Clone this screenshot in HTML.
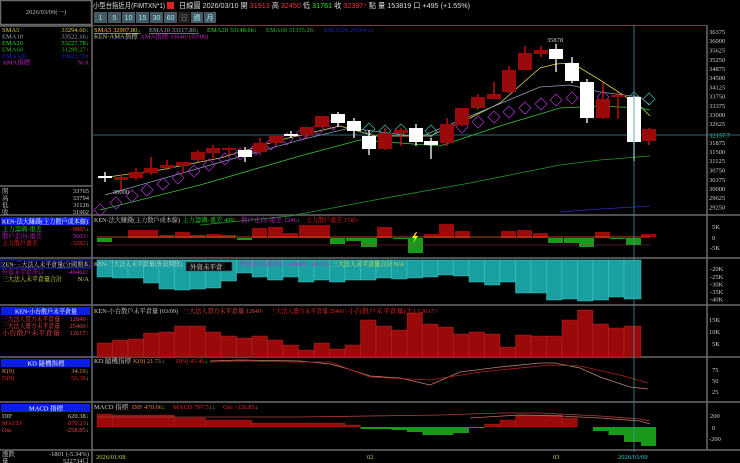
<!DOCTYPE html>
<html><head><meta charset="utf-8"><style>
html,body{margin:0;padding:0;background:#000;width:740px;height:463px;overflow:hidden}
svg{display:block}
text{font-family:"Liberation Sans","Noto Sans CJK TC",sans-serif;font-size:7px}
.s{font-family:"Liberation Serif","Noto Serif CJK SC",serif;font-size:6.5px}
</style></head><body>
<svg width="740" height="463" viewBox="0 0 740 463">
<rect width="740" height="463" fill="#000"/>
<g fill="none" stroke="#6a6a6a" stroke-width="1.5">
<rect x="0.5" y="0.5" width="91" height="24"/>
<line x1="92" y1="0" x2="92" y2="463"/>
<line x1="0" y1="26" x2="92" y2="26"/>
<line x1="0" y1="186" x2="92" y2="186"/>
<line x1="0" y1="215" x2="740" y2="215"/>
<line x1="0" y1="258" x2="740" y2="258"/>
<line x1="0" y1="305" x2="740" y2="305"/>
<line x1="0" y1="357" x2="740" y2="357"/>
<line x1="0" y1="402" x2="740" y2="402"/>
<line x1="0" y1="450" x2="740" y2="450"/>
<line x1="707" y1="25" x2="707" y2="450"/>
</g>
<rect x="93" y="25" width="614" height="1" fill="#7a3a4a"/>
<text x="46" y="14" fill="#bbb" text-anchor="middle" class="s">2026/03/09(一)</text>
<g class="s">
<text x="2" y="32" fill="#e0d040" class="s">SMA5</text><text x="89" y="32" fill="#e0d040" text-anchor="end" class="s">33294.60<tspan fill="#0f0">↓</tspan></text>
<text x="2" y="38.5" fill="#9ab" class="s">EMA10</text><text x="89" y="38.5" fill="#9ab" text-anchor="end" class="s">33522.16<tspan fill="#0f0">↓</tspan></text>
<text x="2" y="45" fill="#2d2" class="s">EMA20</text><text x="89" y="45" fill="#2d2" text-anchor="end" class="s">33227.78<tspan fill="#0f0">↓</tspan></text>
<text x="2" y="51.5" fill="#2b2" class="s">EMA60</text><text x="89" y="51.5" fill="#2b2" text-anchor="end" class="s">31299.27<tspan fill="#f22">↑</tspan></text>
<text x="2" y="58" fill="#22c" class="s">EMA120</text><text x="89" y="58" fill="#22c" text-anchor="end" class="s">29623.70<tspan fill="#f22">↑</tspan></text>
<text x="2" y="64.5" fill="#c2c" class="s">AMA指標</text><text x="89" y="64.5" fill="#c2c" text-anchor="end" class="s">N/A</text>
<text x="2" y="193" fill="#ccc" class="s">開</text><text x="89" y="193" fill="#ccc" text-anchor="end" class="s">33765</text>
<text x="2" y="200" fill="#ccc" class="s">高</text><text x="89" y="200" fill="#ccc" text-anchor="end" class="s">33794</text>
<text x="2" y="207" fill="#ccc" class="s">低</text><text x="89" y="207" fill="#ccc" text-anchor="end" class="s">31126</text>
<text x="2" y="214" fill="#ccc" class="s">收</text><text x="89" y="214" fill="#ccc" text-anchor="end" class="s">31902</text>
</g>
<rect x="1" y="217" width="89" height="8" fill="#0a1ee8"/>
<text x="2" y="223.5" fill="#fff" class="s" textLength="86" lengthAdjust="spacingAndGlyphs">KEN-法大賺錢(主力散戶成本線)</text>
<text x="2" y="231" fill="#2d2" class="s" textLength="40" lengthAdjust="spacingAndGlyphs">主力籌碼-重差</text><text x="89" y="231" fill="#e33" text-anchor="end" class="s">-9885<tspan fill="#0f0">↓</tspan></text>
<text x="2" y="238" fill="#c2c" class="s" textLength="40" lengthAdjust="spacingAndGlyphs">散戶走向-重差</text><text x="89" y="238" fill="#c2c" text-anchor="end" class="s">5603<tspan fill="#f22">↑</tspan></text>
<text x="2" y="245" fill="#e22" class="s" textLength="36" lengthAdjust="spacingAndGlyphs">主力散戶重差</text><text x="89" y="245" fill="#e22" text-anchor="end" class="s">-3282<tspan fill="#0f0">↓</tspan></text>
<rect x="1" y="260" width="89" height="8" fill="#000" stroke="#1a2ee8" stroke-width="1"/>
<text x="2" y="266.5" fill="#ddd" class="s" textLength="87" lengthAdjust="spacingAndGlyphs">ZEN-三大法人未平倉量(分國期本</text>
<text x="2" y="274" fill="#c2c" class="s" textLength="42" lengthAdjust="spacingAndGlyphs">外資未平倉淨口</text><text x="89" y="274" fill="#c2c" text-anchor="end" class="s">-40462<tspan fill="#f22">↑</tspan></text>
<text x="2" y="281" fill="#dd4" class="s" textLength="60" lengthAdjust="spacingAndGlyphs">三大法人未平倉量合計</text><text x="89" y="281" fill="#dd4" text-anchor="end" class="s">N/A</text>
<rect x="1" y="307" width="89" height="8" fill="#0a1ee8"/>
<text x="46" y="313.5" fill="#fff" text-anchor="middle" class="s" textLength="62" lengthAdjust="spacingAndGlyphs">KEN-小台散戶未平倉量</text>
<text x="2" y="321" fill="#e44" class="s" textLength="58" lengthAdjust="spacingAndGlyphs">三大法人買方未平倉量</text><text x="89" y="321" fill="#e44" text-anchor="end" class="s">12849<tspan fill="#f22">↑</tspan></text>
<text x="2" y="328" fill="#e44" class="s" textLength="58" lengthAdjust="spacingAndGlyphs">三大法人賣方未平倉量</text><text x="89" y="328" fill="#e44" text-anchor="end" class="s">25466<tspan fill="#f22">↑</tspan></text>
<text x="2" y="335" fill="#e44" class="s" textLength="58" lengthAdjust="spacingAndGlyphs">小台散戶未平倉量</text><text x="89" y="335" fill="#e44" text-anchor="end" class="s">12617<tspan fill="#f22">↑</tspan></text>
<rect x="1" y="359" width="89" height="8" fill="#0a1ee8"/>
<text x="46" y="365.5" fill="#fff" text-anchor="middle" class="s">KD 隨機指標</text>
<text x="2" y="373" fill="#d84" class="s">K(9)</text><text x="89" y="373" fill="#d84" text-anchor="end" class="s">34.19<tspan fill="#0f0">↓</tspan></text>
<text x="2" y="380" fill="#d22" class="s">D(9)</text><text x="89" y="380" fill="#d22" text-anchor="end" class="s">50.38<tspan fill="#0f0">↓</tspan></text>
<rect x="1" y="404" width="89" height="8" fill="#0a1ee8"/>
<text x="46" y="410.5" fill="#fff" text-anchor="middle" class="s">MACD 指標</text>
<text x="2" y="418" fill="#ccc" class="s">DIF</text><text x="89" y="418" fill="#ccc" text-anchor="end" class="s">620.38<tspan fill="#0f0">↓</tspan></text>
<text x="2" y="425" fill="#e22" class="s">MACD</text><text x="89" y="425" fill="#e22" text-anchor="end" class="s">879.23<tspan fill="#0f0">↓</tspan></text>
<text x="2" y="432" fill="#e44" class="s">Osc</text><text x="89" y="432" fill="#e44" text-anchor="end" class="s">-258.85<tspan fill="#0f0">↓</tspan></text>
<text x="2" y="456" fill="#ccc" class="s">漲跌</text><text x="89" y="456" fill="#ccc" text-anchor="end" class="s">-1801 (-5.34%)</text>
<text x="2" y="463" fill="#ccc" class="s">量</text><text x="89" y="463" fill="#ccc" text-anchor="end" class="s">522734口</text>

<text x="93" y="8" fill="#ddd" style="font-size:7.5px" textLength="72" lengthAdjust="spacingAndGlyphs">小型台指近月(FIMTXN*1)</text>
<rect x="167" y="2" width="7" height="7" fill="#d22"/>
<text x="179" y="8" fill="#ddd" style="font-size:7.5px" textLength="291" lengthAdjust="spacingAndGlyphs">日線圖 2026/03/10 開 <tspan fill="#f33">31913</tspan> 高 <tspan fill="#f33">32450</tspan> 低 <tspan fill="#2e2">31761</tspan> 收 <tspan fill="#f33">32397</tspan><tspan fill="#f33">↑</tspan> 點 量 153819 口 +495 (+1.55%)</text>
<g>
<rect x="94" y="12" width="13" height="11" fill="#465a66"/><text x="100.5" y="20" fill="#9ee" text-anchor="middle">1</text>
<rect x="108" y="12" width="13" height="11" fill="#465a66"/><text x="114.5" y="20" fill="#9ee" text-anchor="middle">5</text>
<rect x="122" y="12" width="13" height="11" fill="#465a66"/><text x="128.5" y="20" fill="#9ee" text-anchor="middle">10</text>
<rect x="136" y="12" width="13" height="11" fill="#465a66"/><text x="142.5" y="20" fill="#9ee" text-anchor="middle">15</text>
<rect x="150" y="12" width="13" height="11" fill="#465a66"/><text x="156.5" y="20" fill="#9ee" text-anchor="middle">30</text>
<rect x="164" y="12" width="13" height="11" fill="#465a66"/><text x="170.5" y="20" fill="#9ee" text-anchor="middle">60</text>
<rect x="178" y="12" width="12" height="11" fill="#222"/><text x="184" y="20" fill="#777" text-anchor="middle">日</text>
<rect x="191" y="12" width="12" height="11" fill="#465a66"/><text x="197" y="20" fill="#9ee" text-anchor="middle">週</text>
<rect x="204" y="12" width="12" height="11" fill="#465a66"/><text x="210" y="20" fill="#9ee" text-anchor="middle">月</text>
</g>
<text x="94" y="32" fill="#dd4" class="s" text-decoration="underline">SMA5 32907.80<tspan fill="#0f0">↓</tspan></text>
<text x="149" y="32" fill="#9ab" class="s" text-decoration="underline">EMA10 33117.80<tspan fill="#0f0">↓</tspan></text>
<text x="207" y="32" fill="#2d2" class="s">EMA20 33148.66<tspan fill="#0f0">↓</tspan></text>
<text x="266" y="32" fill="#2b2" class="s">EMA60 31335.26<tspan fill="#f22">↑</tspan></text>
<text x="324" y="32" fill="#22c" class="s">EMA120 29304.2<tspan fill="#f22">↑</tspan></text>
<text x="94" y="38.5" fill="#ccc" class="s">KEN-AMA指標</text>
<text x="140" y="38.5" fill="#c2c" class="s">AMA指標 33640<tspan fill="#f22">↑</tspan>(03/06)</text>

<g fill="#ccc" class="s">
<text x="709" y="34" class="s">36375</text><text x="709" y="43" class="s">36000</text><text x="709" y="52.5" class="s">35625</text><text x="709" y="62" class="s">35250</text><text x="709" y="71" class="s">34875</text><text x="709" y="80" class="s">34500</text><text x="709" y="89.5" class="s">34125</text><text x="709" y="98.5" class="s">33750</text><text x="709" y="108" class="s">33375</text><text x="709" y="117" class="s">33000</text><text x="709" y="126" class="s">32625</text><text x="709" y="145" class="s">31875</text><text x="709" y="154" class="s">31500</text><text x="709" y="163" class="s">31125</text><text x="709" y="172.5" class="s">30750</text><text x="709" y="182" class="s">30375</text><text x="709" y="191" class="s">30000</text><text x="709" y="200" class="s">29625</text><text x="709" y="209.5" class="s">29250</text>
<text x="709" y="137.5" fill="#2dc" class="s">32157.7</text>
<text x="712" y="229" class="s">5K</text><text x="712" y="240" class="s">0</text><text x="710" y="250" class="s">-5K</text>
<text x="710" y="271" class="s">-20K</text><text x="710" y="279" class="s">-25K</text><text x="710" y="286.5" class="s">-30K</text><text x="710" y="294" class="s">-35K</text><text x="710" y="301.5" class="s">-40K</text>
<text x="709" y="322" class="s">15K</text><text x="709" y="334" class="s">10K</text><text x="712" y="346" class="s">5K</text>
<text x="712" y="372" class="s">75</text><text x="712" y="383" class="s">50</text><text x="712" y="394" class="s">25</text>
<text x="710" y="418" class="s">200</text><text x="712" y="430" class="s">0</text><text x="709" y="441" class="s">-200</text>
</g>

<line x1="93" y1="135" x2="740" y2="135" fill="none" stroke="#3a8a9a" stroke-width="0.8"/>
<g fill="none" stroke-width="0.8">
<polyline stroke="#e2d050" points="100,178 160,170 220,158 280,140 340,126 375,136 430,136 470,118 500,103 540,68 556,64 572,63 600,80 620,93 640,106 650,116"/>
<polyline stroke="#8aa0b8" points="105,195 200,168 300,140 350,128 420,137 480,112 540,87 570,85 600,92 640,97 650,105"/>
<polyline stroke="#3ac23a" points="100,210 200,185 300,156 360,140 440,146 500,126 560,108 600,106 640,108 650,110"/>
<polyline stroke="#1f9a2a" points="200,225 290,216 380,199 470,183 560,165 600,160 650,156"/>
<polyline stroke="#2a2ad0" points="560,212 600,209 650,206"/>
</g>
<g fill="none" stroke="#a030c0" stroke-width="0.8">
<path d="M100,204 l6,6 l-6,6 l-6,-6z M116,197 l6,6 l-6,6 l-6,-6z M132,190 l6,6 l-6,6 l-6,-6z M147,184 l6,6 l-6,6 l-6,-6z M163,178 l6,6 l-6,6 l-6,-6z M178,172 l6,6 l-6,6 l-6,-6z M194,165 l6,6 l-6,6 l-6,-6z M209,159 l6,6 l-6,6 l-6,-6z M225,153 l6,6 l-6,6 l-6,-6z M240,148 l6,6 l-6,6 l-6,-6z M256,143 l6,6 l-6,6 l-6,-6z M271,138 l6,6 l-6,6 l-6,-6z M287,133 l6,6 l-6,6 l-6,-6z M302,128 l6,6 l-6,6 l-6,-6z M318,123 l6,6 l-6,6 l-6,-6z M333,118 l6,6 l-6,6 l-6,-6z"/>
<path d="M462,121 l6,6 l-6,6 l-6,-6z M478,116 l6,6 l-6,6 l-6,-6z M494,111 l6,6 l-6,6 l-6,-6z M509,106 l6,6 l-6,6 l-6,-6z M525,102 l6,6 l-6,6 l-6,-6z M541,98 l6,6 l-6,6 l-6,-6z M556,94 l6,6 l-6,6 l-6,-6z M572,92 l6,6 l-6,6 l-6,-6z M603,91 l6,6 l-6,6 l-6,-6z"/>
</g>
<g fill="none" stroke="#3aa89a" stroke-width="0.8">
<path d="M369,123 l6,6 l-6,6 l-6,-6z M385,125 l6,6 l-6,6 l-6,-6z M401,124 l6,6 l-6,6 l-6,-6z M431,125 l6,6 l-6,6 l-6,-6z M447,125 l6,6 l-6,6 l-6,-6z M587,92 l6,6 l-6,6 l-6,-6z M634,92 l6,6 l-6,6 l-6,-6z M649,93 l6,6 l-6,6 l-6,-6z"/>
</g>
<g stroke-width="1.3">
<g stroke="#fff"><line x1="105" y1="172" x2="105" y2="182"/><line x1="245" y1="147" x2="245" y2="162"/><line x1="291" y1="131" x2="291" y2="138"/><line x1="338" y1="112" x2="338" y2="127"/><line x1="354" y1="118" x2="354" y2="138"/><line x1="369" y1="130" x2="369" y2="155"/><line x1="416" y1="124" x2="416" y2="146"/><line x1="431" y1="138" x2="431" y2="159"/><line x1="556" y1="44" x2="556" y2="72"/><line x1="572" y1="57" x2="572" y2="83"/><line x1="587" y1="79" x2="587" y2="123"/><line x1="634" y1="95" x2="634" y2="161"/></g>
<g stroke="#e81010"><line x1="121" y1="175" x2="121" y2="190"/><line x1="136" y1="168" x2="136" y2="180"/><line x1="151" y1="157" x2="151" y2="175"/><line x1="167" y1="160" x2="167" y2="170"/><line x1="183" y1="162" x2="183" y2="173"/><line x1="198" y1="150" x2="198" y2="162"/><line x1="213" y1="145" x2="213" y2="158"/><line x1="229" y1="147" x2="229" y2="155"/><line x1="260" y1="138" x2="260" y2="155"/><line x1="276" y1="136" x2="276" y2="145"/><line x1="307" y1="127" x2="307" y2="138"/><line x1="322" y1="116" x2="322" y2="128"/><line x1="385" y1="128" x2="385" y2="150"/><line x1="401" y1="128" x2="401" y2="146"/><line x1="447" y1="118" x2="447" y2="146"/><line x1="462" y1="108" x2="462" y2="126"/><line x1="478" y1="94" x2="478" y2="110"/><line x1="494" y1="82" x2="494" y2="99"/><line x1="509" y1="66" x2="509" y2="93"/><line x1="525" y1="46" x2="525" y2="70"/><line x1="541" y1="46" x2="541" y2="57"/><line x1="603" y1="83" x2="603" y2="119"/><line x1="618" y1="92" x2="618" y2="119"/><line x1="649" y1="128" x2="649" y2="145"/></g>
</g>
<g fill="#fff">
<rect x="98" y="176" width="14" height="2"/><rect x="238" y="150" width="14" height="7"/><rect x="284" y="134" width="14" height="2"/><rect x="331" y="114" width="14" height="9"/><rect x="347" y="121" width="14" height="10"/><rect x="362" y="136" width="14" height="13"/><rect x="409" y="128" width="14" height="14"/><rect x="424" y="141" width="14" height="4"/><rect x="549" y="49" width="14" height="10"/><rect x="565" y="63" width="14" height="18"/><rect x="580" y="82" width="14" height="36"/><rect x="627" y="97" width="14" height="45"/>
</g>
<g fill="#9a0a0a">
<rect x="114" y="177" width="14" height="3"/><rect x="129" y="172" width="14" height="6"/><rect x="144" y="168" width="14" height="5"/><rect x="160" y="165" width="14" height="3"/><rect x="176" y="162" width="14" height="4"/><rect x="191" y="152" width="14" height="8"/><rect x="206" y="148" width="14" height="5"/><rect x="222" y="148" width="14" height="2"/><rect x="253" y="143" width="14" height="9"/><rect x="269" y="136" width="14" height="7"/><rect x="300" y="127" width="14" height="8"/><rect x="315" y="116" width="14" height="11"/><rect x="378" y="133" width="14" height="16"/><rect x="394" y="130" width="14" height="3"/><rect x="440" y="124" width="14" height="19"/><rect x="455" y="108" width="14" height="17"/><rect x="471" y="97" width="14" height="11"/><rect x="487" y="94" width="14" height="5"/><rect x="502" y="70" width="14" height="22"/><rect x="518" y="53" width="14" height="17"/><rect x="534" y="50" width="14" height="4"/><rect x="596" y="99" width="14" height="19"/><rect x="611" y="95" width="14" height="2"/><rect x="642" y="129" width="14" height="12"/>
</g>
<text x="555" y="42" fill="#ccc" text-anchor="middle" class="s">35878</text>
<text x="121" y="194" fill="#ccc" text-anchor="middle" class="s">30000</text>

<text x="94" y="222" fill="#ccc" class="s" textLength="86" lengthAdjust="spacingAndGlyphs">KEN-法大賺錢(主力散戶成本線)</text>
<text x="182" y="222" fill="#2d2" class="s" textLength="55" lengthAdjust="spacingAndGlyphs">主力籌碼-重差 499<tspan fill="#f22">↑</tspan></text>
<text x="241" y="222" fill="#c2c" class="s" textLength="59" lengthAdjust="spacingAndGlyphs">散戶走向-重差 1246<tspan fill="#0f0">↓</tspan></text>
<text x="306" y="222" fill="#e22" class="s" textLength="53" lengthAdjust="spacingAndGlyphs">主力散戶重差 1745<tspan fill="#f22">↑</tspan></text>
<g fill="#9a0a0a">
<rect x="128" y="230" width="15" height="8"/><rect x="143" y="230" width="15" height="8"/><rect x="159" y="235" width="15" height="3"/><rect x="175" y="232" width="15" height="6"/><rect x="190" y="235" width="15" height="3"/><rect x="206" y="234" width="15" height="4"/><rect x="221" y="235" width="15" height="3"/><rect x="252" y="228" width="15" height="10"/><rect x="268" y="227" width="15" height="11"/><rect x="283" y="233" width="15" height="5"/><rect x="299" y="225" width="31" height="13"/><rect x="377" y="227" width="15" height="11"/><rect x="424" y="234" width="15" height="4"/><rect x="439" y="224" width="15" height="14"/><rect x="455" y="231" width="15" height="7"/><rect x="501" y="231" width="15" height="7"/><rect x="517" y="230" width="15" height="8"/><rect x="533" y="233" width="15" height="5"/><rect x="595" y="232" width="15" height="6"/><rect x="641" y="234" width="15" height="3"/>
</g>
<g fill="#1a9a1a">
<rect x="97" y="238" width="15" height="4"/><rect x="237" y="238" width="15" height="2"/><rect x="330" y="238" width="15" height="6"/><rect x="346" y="238" width="15" height="3"/><rect x="361" y="238" width="16" height="9"/><rect x="393" y="238" width="15" height="1"/><rect x="408" y="238" width="15" height="15"/><rect x="548" y="238" width="15" height="5"/><rect x="564" y="238" width="15" height="5"/><rect x="579" y="238" width="15" height="9"/><rect x="610" y="238" width="15" height="1"/><rect x="626" y="238" width="15" height="7"/>
</g>
<line x1="97" y1="237" x2="650" y2="237" stroke="#e06020" stroke-width="0.8"/>
<line x1="97" y1="245" x2="650" y2="245" stroke="#a03060" stroke-width="0.6"/>
<path d="M416,232 l-4,6 h3 l-2,5 l5,-7 h-3 l2,-4z" fill="#ff0"/>

<g fill="#1aa0a0" stroke="#44c8c8" stroke-width="0.5">
<rect x="97" y="260" width="15.5" height="17"/><rect x="112.5" y="260" width="15.5" height="18"/><rect x="128" y="260" width="15.5" height="18"/><rect x="143.5" y="260" width="15.5" height="23"/><rect x="159" y="260" width="15.5" height="29"/><rect x="174.5" y="260" width="15.5" height="30"/><rect x="190" y="260" width="15.5" height="29"/><rect x="205.5" y="260" width="15.5" height="28"/><rect x="221" y="260" width="15.5" height="21"/><rect x="236.5" y="260" width="15.5" height="13"/><rect x="252" y="260" width="15.5" height="17"/><rect x="267.5" y="260" width="15.5" height="20"/><rect x="283" y="260" width="15.5" height="17"/><rect x="298.5" y="260" width="15.5" height="22"/><rect x="314" y="260" width="15.5" height="20"/><rect x="329.5" y="260" width="15.5" height="22"/><rect x="345" y="260" width="15.5" height="20"/><rect x="360.5" y="260" width="15.5" height="20"/><rect x="376" y="260" width="15.5" height="18"/><rect x="391.5" y="260" width="15.5" height="19"/><rect x="407" y="260" width="15.5" height="18"/><rect x="422.5" y="260" width="15.5" height="17"/><rect x="438" y="260" width="15.5" height="15"/><rect x="453.5" y="260" width="15.5" height="16"/><rect x="469" y="260" width="15.5" height="22"/><rect x="484.5" y="260" width="15.5" height="25"/><rect x="500" y="260" width="15.5" height="22"/><rect x="515.5" y="260" width="15.5" height="33"/><rect x="531" y="260" width="15.5" height="33"/><rect x="546.5" y="260" width="15.5" height="40"/><rect x="562" y="260" width="15.5" height="39"/><rect x="577.5" y="260" width="15.5" height="41"/><rect x="593" y="260" width="15.5" height="40"/><rect x="608.5" y="260" width="15.5" height="37"/><rect x="624" y="260" width="17" height="39"/>
</g>
<text x="94" y="266" fill="#ccc" class="s" textLength="88" lengthAdjust="spacingAndGlyphs">KEN-三大法人未平倉量(外資期貨)</text>
<rect x="186" y="262" width="46" height="9" fill="#111" stroke="#555" stroke-width="0.5"/>
<text x="190" y="269" fill="#ddd" class="s">外資未平倉</text>
<rect x="225" y="263" width="6" height="7" fill="#000"/>
<text x="239" y="266" fill="#c2c" class="s" textLength="90" lengthAdjust="spacingAndGlyphs">外資未平倉淨口 -40462<tspan fill="#f22">↑</tspan> 40.1%</text>
<text x="332" y="266" fill="#dd4" class="s" textLength="72" lengthAdjust="spacingAndGlyphs">三大法人未平倉量合計 N/A</text>

<g fill="#9a0a0a" stroke="#b83030" stroke-width="0.4">
<rect x="97" y="343" width="15.5" height="14"/><rect x="112.5" y="340" width="15.5" height="17"/><rect x="128" y="339" width="15.5" height="18"/><rect x="143.5" y="333" width="15.5" height="24"/><rect x="159" y="332" width="15.5" height="25"/><rect x="174.5" y="326" width="15.5" height="31"/><rect x="190" y="326" width="15.5" height="31"/><rect x="205.5" y="332" width="15.5" height="25"/><rect x="221" y="336" width="15.5" height="21"/><rect x="236.5" y="338" width="15.5" height="19"/><rect x="252" y="336" width="15.5" height="21"/><rect x="267.5" y="340" width="15.5" height="17"/><rect x="283" y="345" width="15.5" height="12"/><rect x="298.5" y="350" width="15.5" height="7"/><rect x="314" y="343" width="15.5" height="14"/><rect x="329.5" y="349" width="15.5" height="8"/><rect x="345" y="345" width="15.5" height="12"/><rect x="360.5" y="320" width="15.5" height="37"/><rect x="376" y="326" width="15.5" height="31"/><rect x="391.5" y="330" width="15.5" height="27"/><rect x="407" y="313" width="15.5" height="44"/><rect x="422.5" y="324" width="15.5" height="33"/><rect x="438" y="327" width="15.5" height="30"/><rect x="453.5" y="334" width="15.5" height="23"/><rect x="469" y="332" width="15.5" height="25"/><rect x="484.5" y="334" width="15.5" height="23"/><rect x="500" y="347" width="15.5" height="10"/><rect x="515.5" y="335" width="15.5" height="22"/><rect x="531" y="336" width="15.5" height="21"/><rect x="546.5" y="336" width="15.5" height="21"/><rect x="562" y="320" width="15.5" height="37"/><rect x="577.5" y="310" width="15.5" height="47"/><rect x="593" y="324" width="15.5" height="33"/><rect x="608.5" y="328" width="15.5" height="29"/><rect x="624" y="326" width="17" height="31"/>
</g>
<text x="94" y="313" fill="#ccc" class="s" textLength="84" lengthAdjust="spacingAndGlyphs">KEN-小台散戶未平倉量 (03/09)</text>
<text x="183" y="313" fill="#e44" class="s" textLength="81" lengthAdjust="spacingAndGlyphs">三大法人買方未平倉量 12849<tspan fill="#f22">↑</tspan></text>
<text x="270" y="313" fill="#e22" class="s" textLength="77" lengthAdjust="spacingAndGlyphs">三大法人賣方未平倉量 25466<tspan fill="#f22">↑</tspan></text>
<text x="348" y="313" fill="#e22" class="s" textLength="90" lengthAdjust="spacingAndGlyphs">小台散戶未平倉量(大) 12617<tspan fill="#f22">↑</tspan></text>

<text x="94" y="363" fill="#ccc" class="s">KD 隨機指標</text>
<text x="133" y="363" fill="#d84" class="s">K(9) 21.71<tspan fill="#0f0">↓</tspan></text>
<text x="176" y="363" fill="#d22" class="s">D(9) 45.46<tspan fill="#0f0">↓</tspan></text>
<g fill="none" stroke-width="0.8">
<polyline stroke="#c08070" points="210,361 240,360 300,361 330,364 345,368 370,376 400,378 430,385 460,372 500,367 540,363 555,363 580,368 600,377 630,387 648,389"/>
<polyline stroke="#b02020" points="210,362 240,361 300,362 330,362 370,377 430,380 480,372 550,365 580,366 620,375 648,383"/>
</g>

<text x="94" y="409" fill="#ccc" class="s">MACD 指標</text>
<text x="132" y="409" fill="#d84" class="s">DIF 470.66<tspan fill="#0f0">↓</tspan></text>
<text x="173" y="409" fill="#e22" class="s">MACD 797.51<tspan fill="#0f0">↓</tspan></text>
<text x="223" y="409" fill="#e22" class="s">Osc -326.85<tspan fill="#0f0">↓</tspan></text>
<g fill="#9a0a0a" stroke="#b83030" stroke-width="0.3">
<rect x="97" y="414" width="15.5" height="13"/><rect x="112.5" y="415" width="62" height="12"/><rect x="174.5" y="418" width="31" height="9"/><rect x="205.5" y="420" width="46.5" height="7"/><rect x="252" y="423" width="93" height="4"/><rect x="345" y="425" width="15.5" height="2"/><rect x="484.5" y="424" width="15.5" height="3"/><rect x="500" y="420" width="15.5" height="7"/><rect x="515.5" y="415" width="46.5" height="12"/><rect x="562" y="418" width="15.5" height="9"/>
</g>
<g fill="#1a9a1a">
<rect x="360.5" y="427" width="31" height="2"/><rect x="391.5" y="427" width="15.5" height="3"/><rect x="407" y="427" width="15.5" height="5"/><rect x="422.5" y="427" width="31" height="8"/><rect x="453.5" y="427" width="15.5" height="6"/><rect x="469" y="427" width="15.5" height="1"/><rect x="593" y="427" width="15.5" height="4"/><rect x="608.5" y="427" width="15.5" height="8"/><rect x="624" y="427" width="17" height="15"/><rect x="641" y="427" width="15" height="19"/>
</g>
<g fill="none" stroke-width="0.8">
<polyline stroke="#b04040" points="97,417 300,417 440,415 500,413 540,413 600,416 640,419 650,421"/>
<polyline stroke="#c07060" points="470,418 520,415 560,416 600,418 640,421 650,424"/>
</g>

<line x1="634" y1="25" x2="634" y2="452" stroke="#3a9aaa" stroke-width="0.8"/>

<text x="96" y="459" fill="#cc4" class="s">2026/01/08</text>
<text x="367" y="459" fill="#cc4" class="s">02</text>
<text x="553" y="459" fill="#cc4" class="s">03</text>
<text x="618" y="459" fill="#3cc" class="s">2026/03/09</text>
</svg>
</body></html>
